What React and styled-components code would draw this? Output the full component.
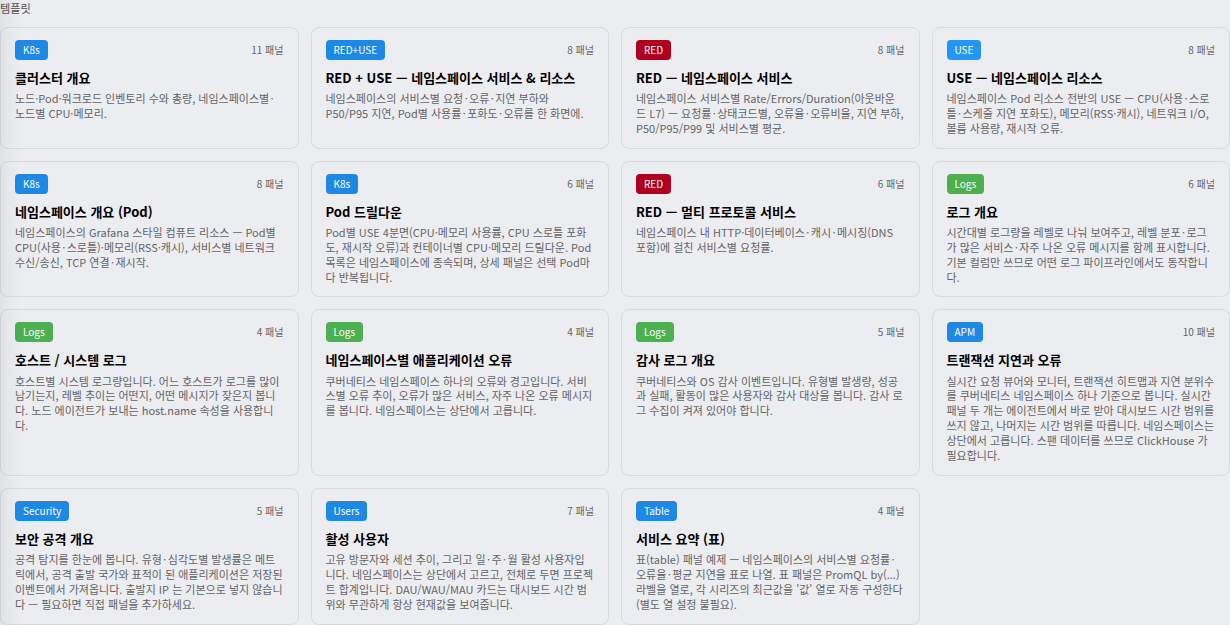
import React from "react";
import styled, { createGlobalStyle } from "styled-components";

const GlobalStyle = createGlobalStyle`
  * { box-sizing: border-box; }
  html, body { margin: 0; height: 100%; overflow: hidden; background: #ecedf1; }
  body { font-family: "Noto Sans CJK KR", sans-serif; color: #000; }
`;

const Page = styled.main`
  position: relative;
  height: 625px;
  overflow: hidden;
`;

const EdgeShade = styled.div`
  position: absolute;
  inset: 0 auto 0 0;
  width: 24px;
  pointer-events: none;
  background: linear-gradient(to right, rgba(0, 0, 0, 0.05), rgba(0, 0, 0, 0.02) 40%, rgba(0, 0, 0, 0));
`;

const SectionLabel = styled.h2`
  margin: 0;
  height: 27px;
  font-size: 11.2px;
  font-weight: 400;
  line-height: 17px;
  color: #4f5052;
`;

const CardGrid = styled.section`
  display: grid;
  grid-template-columns: repeat(4, minmax(0, 1fr));
  gap: 12px;
`;

const Card = styled.article`
  border: 1px solid #d9dadd;
  border-radius: 8px;
  padding: 12px 14px;
`;

const CardHeader = styled.header`
  display: flex;
  align-items: center;
  justify-content: space-between;
  height: 20px;
  margin-bottom: 8px;
`;

const tones = { blue: "#1e88e5", sky: "#2196f3", red: "#b00020", green: "#4caf50" };

const Badge = styled.span`
  height: 20px;
  padding: 0 8px;
  border-radius: 4px;
  font-size: 10px;
  line-height: 20px;
  color: #fff;
  background: ${({ $tone }) => tones[$tone]};
`;

const PanelCount = styled.span`
  font-size: 10px;
  line-height: 20px;
  color: #636466;
`;

const CardTitle = styled.h3`
  margin: 0 0 4px;
  font-size: 13px;
  font-weight: 700;
  line-height: 19.16px;
  white-space: nowrap;
`;

const Description = styled.p`
  margin: 0;
  font-size: 11px;
  line-height: 14.87px;
  color: #636466;
  white-space: nowrap;
`;

const MiddleDot = styled.span`
  margin: 0 1.4px;
`;

const templates = [
  { tag: "K8s", tone: "blue", count: 11, title: "클러스터 개요", lines: ["노드·Pod·워크로드 인벤토리 수와 총량, 네임스페이스별·", "노드별 CPU·메모리."] },
  { tag: "RED+USE", tone: "blue", count: 8, title: "RED + USE — 네임스페이스 서비스 & 리소스", lines: ["네임스페이스의 서비스별 요청·오류·지연 부하와", "P50/P95 지연, Pod별 사용률·포화도·오류를 한 화면에."] },
  { tag: "RED", tone: "red", count: 8, title: "RED — 네임스페이스 서비스", lines: ["네임스페이스 서비스별 Rate/Errors/Duration(아웃바운", "드 L7) — 요청률·상태코드별, 오류율·오류비율, 지연 부하,", "P50/P95/P99 및 서비스별 평균."] },
  { tag: "USE", tone: "sky", count: 8, title: "USE — 네임스페이스 리소스", lines: ["네임스페이스 Pod 리소스 전반의 USE — CPU(사용·스로", "틀·스케줄 지연 포화도), 메모리(RSS·캐시), 네트워크 I/O,", "볼륨 사용량, 재시작 오류."] },
  { tag: "K8s", tone: "blue", count: 8, title: "네임스페이스 개요 (Pod)", lines: ["네임스페이스의 Grafana 스타일 컴퓨트 리소스 — Pod별", "CPU(사용·스로틀)·메모리(RSS·캐시), 서비스별 네트워크", "수신/송신, TCP 연결·재시작."] },
  { tag: "K8s", tone: "blue", count: 6, title: "Pod 드릴다운", lines: ["Pod별 USE 4분면(CPU·메모리 사용률, CPU 스로틀 포화", "도, 재시작 오류)과 컨테이너별 CPU·메모리 드릴다운. Pod", "목록은 네임스페이스에 종속되며, 상세 패널은 선택 Pod마", "다 반복됩니다."] },
  { tag: "RED", tone: "red", count: 6, title: "RED — 멀티 프로토콜 서비스", lines: ["네임스페이스 내 HTTP·데이터베이스·캐시·메시징(DNS", "포함)에 걸친 서비스별 요청률."] },
  { tag: "Logs", tone: "green", count: 6, title: "로그 개요", lines: ["시간대별 로그량을 레벨로 나눠 보여주고, 레벨 분포·로그", "가 많은 서비스·자주 나온 오류 메시지를 함께 표시합니다.", "기본 컬럼만 쓰므로 어떤 로그 파이프라인에서도 동작합니", "다."] },
  { tag: "Logs", tone: "green", count: 4, title: "호스트 / 시스템 로그", lines: ["호스트별 시스템 로그량입니다. 어느 호스트가 로그를 많이", "남기는지, 레벨 추이는 어떤지, 어떤 메시지가 잦은지 봅니", "다. 노드 에이전트가 보내는 host.name 속성을 사용합니", "다."] },
  { tag: "Logs", tone: "green", count: 4, title: "네임스페이스별 애플리케이션 오류", lines: ["쿠버네티스 네임스페이스 하나의 오류와 경고입니다. 서비", "스별 오류 추이, 오류가 많은 서비스, 자주 나온 오류 메시지", "를 봅니다. 네임스페이스는 상단에서 고릅니다."] },
  { tag: "Logs", tone: "green", count: 5, title: "감사 로그 개요", lines: ["쿠버네티스와 OS 감사 이벤트입니다. 유형별 발생량, 성공", "과 실패, 활동이 많은 사용자와 감사 대상을 봅니다. 감사 로", "그 수집이 켜져 있어야 합니다."] },
  { tag: "APM", tone: "blue", count: 10, title: "트랜잭션 지연과 오류", lines: ["실시간 요청 뷰어와 모니터, 트랜잭션 히트맵과 지연 분위수", "를 쿠버네티스 네임스페이스 하나 기준으로 봅니다. 실시간", "패널 두 개는 에이전트에서 바로 받아 대시보드 시간 범위를", "쓰지 않고, 나머지는 시간 범위를 따릅니다. 네임스페이스는", "상단에서 고릅니다. 스팬 데이터를 쓰므로 ClickHouse 가", "필요합니다."] },
  { tag: "Security", tone: "blue", count: 5, title: "보안 공격 개요", lines: ["공격 탐지를 한눈에 봅니다. 유형·심각도별 발생률은 메트", "릭에서, 공격 출발 국가와 표적이 된 애플리케이션은 저장된", "이벤트에서 가져옵니다. 출발지 IP 는 기본으로 넣지 않습니", "다 — 필요하면 직접 패널을 추가하세요."] },
  { tag: "Users", tone: "blue", count: 7, title: "활성 사용자", lines: ["고유 방문자와 세션 추이, 그리고 일·주·월 활성 사용자입", "니다. 네임스페이스는 상단에서 고르고, 전체로 두면 프로젝", "트 합계입니다. DAU/WAU/MAU 카드는 대시보드 시간 범", "위와 무관하게 항상 현재값을 보여줍니다."] },
  { tag: "Table", tone: "blue", count: 4, title: "서비스 요약 (표)", lines: ["표(table) 패널 예제 — 네임스페이스의 서비스별 요청률·", "오류율·평균 지연을 표로 나열. 표 패널은 PromQL by(...)", "라벨을 열로, 각 시리즈의 최근값을 '값' 열로 자동 구성한다", "(별도 열 설정 불필요)."] },
];

// A dot between two Hangul words gets extra room; one next to Latin text or a bracket stays tight.
const hangulDot = /(?<=[가-힣])·(?=[가-힣]|$)/;

function spaceDots(line) {
  return line.split(hangulDot).map((part, i) => (
    <React.Fragment key={i}>
      {i > 0 && <MiddleDot>·</MiddleDot>}
      {part}
    </React.Fragment>
  ));
}

function TemplateCard({ tag, tone, count, title, lines }) {
  return (
    <Card>
      <CardHeader>
        <Badge $tone={tone}>{tag}</Badge>
        <PanelCount>{count} 패널</PanelCount>
      </CardHeader>
      <CardTitle>{title}</CardTitle>
      <Description>
        {lines.map((line, i) => (
          <React.Fragment key={i}>
            {i > 0 && <br />}
            {spaceDots(line)}
          </React.Fragment>
        ))}
      </Description>
    </Card>
  );
}

export default function App() {
  return (
    <>
      <GlobalStyle />
      <Page lang="ko">
        <SectionLabel>템플릿</SectionLabel>
        <CardGrid>
          {templates.map((t) => (
            <TemplateCard key={t.title} {...t} />
          ))}
        </CardGrid>
        <EdgeShade />
      </Page>
    </>
  );
}
